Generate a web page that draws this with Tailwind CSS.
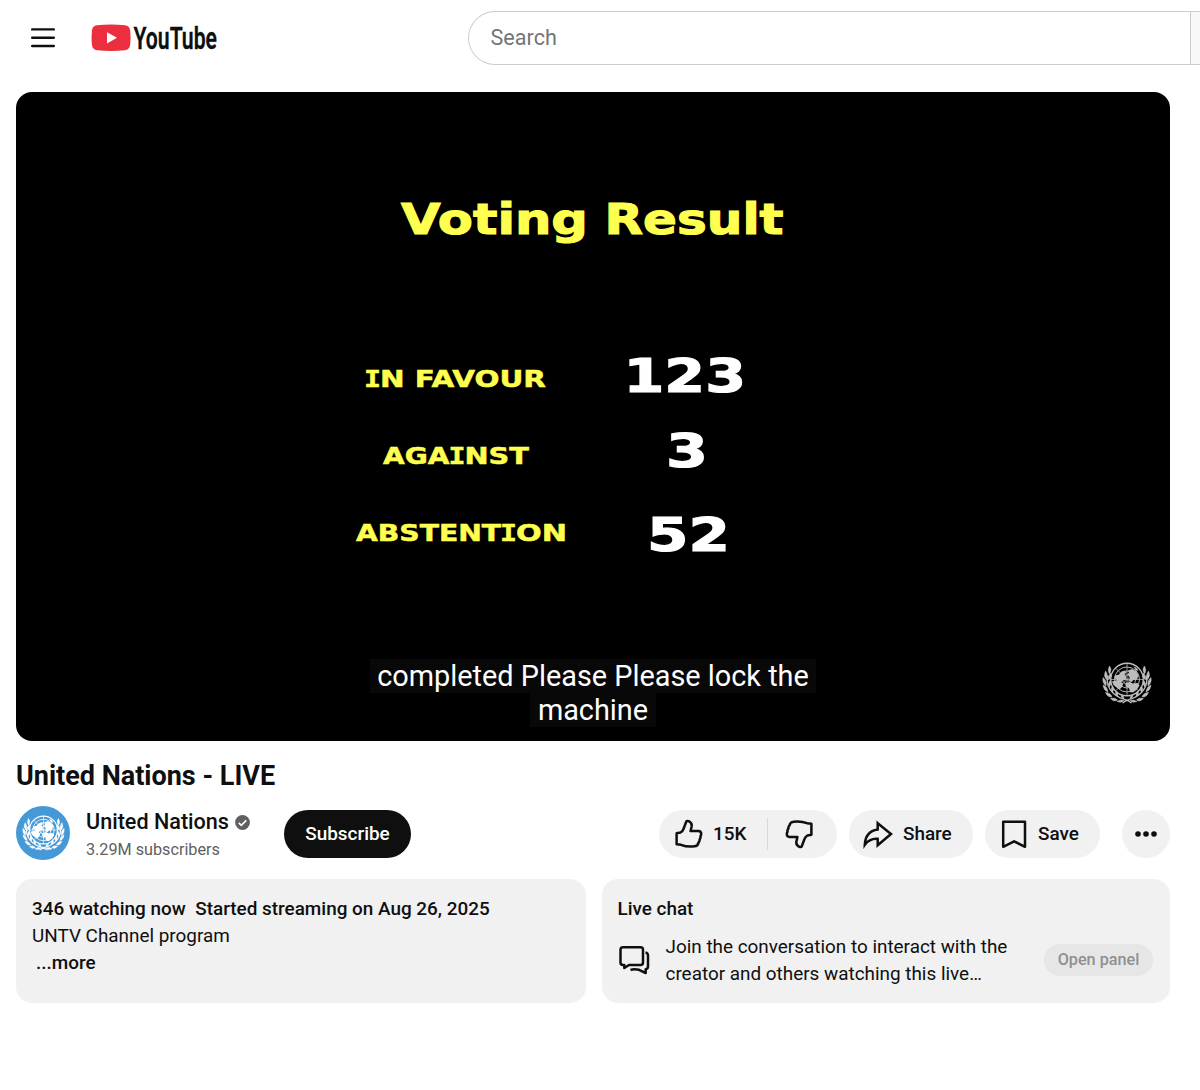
<!DOCTYPE html>
<html lang="en">
<head>
  <meta charset="UTF-8">
  <meta name="viewport" content="width=device-width, initial-scale=1.0">
  <title>United Nations - LIVE - YouTube</title>
  <script src="https://cdn.jsdelivr.net/npm/@tailwindcss/browser@4"></script>
</head>
<body class="bg-white text-[#0f0f0f] font-['Roboto',sans-serif] w-[1200px] h-[1090px] overflow-hidden">

  <!-- Shared UN emblem -->
  <svg class="hidden">
    <symbol id="un-emblem" viewBox="0 0 100 84">
      <g fill="none" stroke="currentColor" stroke-width="1.9">
        <circle cx="50" cy="35" r="32.5" stroke-width="2.6"/>
        <circle cx="50" cy="35" r="25"/>
        <circle cx="50" cy="35" r="17"/>
        <circle cx="50" cy="35" r="9"/>
        <path d="M50 2v66M17 35h66M27 12l46 46M73 12L27 58" stroke-width="1.5"/>
      </g>
      <g fill="currentColor">
        <path d="M34 25l5-6 7-2 3 4-4 4 4 5-2 6-6 1-3 6-5-2-4-7-5-1 2-6z"/>
        <path d="M52 17l8-3 9 5 4 8-3 8-7 1-4 4-6-3 3-6-5-6 3-4z"/>
        <path d="M20 39l11-3 6 5 5 1-1 7-6 6-6-4-6-5z"/>
        <path d="M47 42l8-2 7 3 9-1 4 5-5 8-8 6-6-1-2-8-7-3z"/>
        <path d="M63 8l6 4 4 6-6-2z"/>
      </g>
      <!-- Olive branches -->
      <g id="un-branch">
        <path d="M12 27C6 45 18 67 45 75M45 75q8 2 14 7" fill="none" stroke="currentColor" stroke-width="2.6"/>
        <g fill="currentColor" stroke="currentColor" stroke-width="1">
          <path d="M15 8q6 6 0 16q-5-7 0-16z"/>
          <path d="M7 18q6 7 2 17q-7-7-2-17z"/>
          <path d="M2 31q8 6 6 17q-8-6-6-17z"/>
          <path d="M2 46q9 3 10 14q-9-3-10-14z"/>
          <path d="M7 61q10 0 13 9q-9 1-13-9z"/>
          <path d="M17 73q9-3 14 3q-7 5-14-3z"/>
          <path d="M18 22q3 8-5 14q-2-8 5-14z"/>
          <path d="M17 36q4 7-3 14q-3-7 3-14z"/>
          <path d="M21 48q5 6 0 13q-5-6 0-13z"/>
          <path d="M28 58q6 4 3 11q-6-4-3-11z"/>
          <path d="M38 65q6 2 6 9q-6-2-6-9z"/>
          <path d="M30 79q7-5 14-2q-5 6-14 2z"/>
        </g>
      </g>
      <use href="#un-branch" transform="matrix(-1 0 0 1 100 0)"/>
    </symbol>
  </svg>

  <!-- Masthead -->
  <header class="flex items-center h-[76px] pl-[31px]">
    <button class="block">
      <svg class="w-6 h-5" viewBox="0 0 24 20" stroke="#0f0f0f" stroke-width="2.4" stroke-linecap="round">
        <path d="M1.2 1.4h21.6M1.2 9.700h21.6M1.2 18h21.6"/>
      </svg>
    </button>
    <a class="block ml-9">
      <svg class="w-[137px] h-12 overflow-visible" viewBox="0 -9 137 48">
        <path d="M6 2.2Q20 .8 34 2.2Q38.600 2.700 39.200 7.500Q40 15 39.200 21.500Q38.600 26.800 34 27.300Q20 28.800 6 27.300Q1.400 26.800.900 21.500Q.200 15 .900 7.500Q1.400 2.700 6 2.200z" fill="#ec2f3e"/>
        <path d="M16 9.200v11.200l10-5.600z" fill="#fff"/>
        <text x="42.500" y="26" font-size="31" font-weight="600" textLength="83.500" lengthAdjust="spacingAndGlyphs" fill="#0f0f0f" stroke="#0f0f0f" stroke-width=".3">YouTube</text>
      </svg>
    </a>
    <div class="flex flex-1 h-[54px] ml-60 border border-r-0 border-[#ccc] rounded-l-full overflow-hidden">
      <div class="flex items-center w-[722px] shrink-0 pl-[21.5px] border-r border-[#ccc] text-[21.6px] text-[#757575]">Search</div>
      <div class="flex-1 bg-[#f8f8f8]"></div>
    </div>
  </header>

  <main class="w-[1154px] ml-4 mt-4">

    <!-- Player -->
    <div class="relative h-[649px] bg-black rounded-2xl overflow-hidden">
      <svg class="w-[1154px] h-[649px]" viewBox="16 92 1154 649" font-family="DejaVu Sans" font-weight="700">
        <g fill="#ffff50" stroke="#ffff50">
          <g font-size="42" stroke-width="1.1">
            <text x="401" y="234" textLength="187" lengthAdjust="spacingAndGlyphs">Voting</text>
            <text x="604.500" y="234" textLength="179" lengthAdjust="spacingAndGlyphs">Result</text>
          </g>
          <g font-size="23" stroke-width=".5">
            <text x="364" y="387" font-family="DejaVu Sans Mono" textLength="17" lengthAdjust="spacingAndGlyphs">I</text>
            <text x="380" y="387" textLength="166" lengthAdjust="spacingAndGlyphs">N FAVOUR</text>
            <text x="383" y="464" textLength="66.500" lengthAdjust="spacingAndGlyphs">AGA</text>
            <text x="448.500" y="464" font-family="DejaVu Sans Mono" textLength="17" lengthAdjust="spacingAndGlyphs">I</text>
            <text x="464.500" y="464" textLength="64.500" lengthAdjust="spacingAndGlyphs">NST</text>
            <text x="356" y="541" textLength="145" lengthAdjust="spacingAndGlyphs">ABSTENT</text>
            <text x="500" y="541" font-family="DejaVu Sans Mono" textLength="17" lengthAdjust="spacingAndGlyphs">I</text>
            <text x="516" y="541" textLength="51" lengthAdjust="spacingAndGlyphs">ON</text>
          </g>
        </g>
        <g fill="#fff" stroke="#fff" stroke-width="1.2" font-size="47">
          <text x="623.500" y="392" textLength="122.500" lengthAdjust="spacingAndGlyphs">123</text>
          <text x="666" y="466.500" textLength="42" lengthAdjust="spacingAndGlyphs">3</text>
          <text x="647" y="551" textLength="83" lengthAdjust="spacingAndGlyphs">52</text>
        </g>
      </svg>

      <!-- Captions -->
      <div class="absolute inset-x-0 top-[567px] flex flex-col items-center text-white text-[28.85px] leading-[34px]">
        <span class="bg-[#080808] px-[7.5px]">completed Please Please lock the</span>
        <span class="bg-[#080808] px-[7.5px]">machine</span>
      </div>

      <svg class="absolute left-[1086px] top-[570px] w-[50px] h-[42px] text-[#bdbdbd]"><use href="#un-emblem"/></svg>
    </div>

    <h1 class="mt-[17px] h-9 text-[27px] leading-9 font-bold">United Nations - LIVE</h1>

    <!-- Channel and actions -->
    <div class="flex h-[58px] mt-[11px]">
      <div class="flex items-center justify-center size-[54px] shrink-0 mt-[0.5px] rounded-full bg-[#4499d6] text-white">
        <svg class="w-[43px] h-[36px]"><use href="#un-emblem"/></svg>
      </div>
      <div class="w-[198px] shrink-0 ml-4 pt-[3px]">
        <div class="flex items-center h-[29px] text-[21.6px] font-medium whitespace-nowrap">
          United Nations
          <svg class="size-[15px] ml-1.5 shrink-0" viewBox="0 0 15 15">
            <circle cx="7.500" cy="7.500" r="7.400" fill="#606060"/>
            <path d="M3.800 7.800l2.500 2.500 5-5" fill="none" stroke="#fff" stroke-width="1.700"/>
          </svg>
        </div>
        <div class="h-6 mt-px leading-6 text-[16.2px] text-[#606060]">3.29M subscribers</div>
      </div>
      <button class="w-[127px] h-12 mt-[5px] rounded-full bg-[#0f0f0f] text-white text-[18.9px] font-medium">Subscribe</button>

      <div class="flex ml-auto mt-[5px] text-[18.9px] font-medium">
        <div class="flex items-center w-[178px] h-12 rounded-full bg-[#f1f1f1]">
          <button class="flex items-center w-[108px] pl-[15px]">
            <svg class="size-[30px]" viewBox="0 0 30 30" fill="none" stroke="#0f0f0f" stroke-width="2.500" stroke-linejoin="round">
              <path id="thumb" d="M2.600 14.300L6.500 13.500Q8.700 12.300 9.500 10L12.300 2.500Q13 1.500 14.600 2.200Q18.300 3.800 17.600 7.500L16.600 12H24.500Q27.200 12.200 27.200 14.700Q27.200 16.400 26.400 17.300Q26.900 19.200 25.600 20.500Q25.800 22.500 24.500 23.500Q24 27 20.500 27.300Q13 28.200 7 25.800L2.600 25.200z"/>
            </svg>
            <span class="ml-[9px]">15K</span>
          </button>
          <div class="w-px h-8 bg-[#d9d9d9]"></div>
          <button class="ml-4">
            <svg class="size-[30px]" viewBox="0 0 30 30" fill="none" stroke="#0f0f0f" stroke-width="2.500" stroke-linejoin="round">
              <use href="#thumb" transform="rotate(180 15 15)"/>
            </svg>
          </button>
        </div>
        <button class="flex items-center w-[124px] h-12 ml-3 pl-[14px] rounded-full bg-[#f1f1f1]">
          <svg class="w-[30px] h-[30px]" viewBox="0 0 30 30" fill="none" stroke="#0f0f0f" stroke-width="2.500" stroke-linejoin="miter">
            <path d="M14.700 4.200L28 15L14.700 26.300V19.800Q6.500 19.200 1.800 25.800Q2.300 12.500 14.700 10.500z"/>
          </svg>
          <span class="ml-[10px]">Share</span>
        </button>
        <button class="flex items-center w-[115px] h-12 ml-3 pl-[15px] rounded-full bg-[#f1f1f1]">
          <svg class="size-[30px]" viewBox="0 0 30 30" fill="none" stroke="#0f0f0f" stroke-width="2.500" stroke-linejoin="round">
            <path d="M3.200 2.800h21.800v25L14.100 22.300L3.200 27.800z"/>
          </svg>
          <span class="ml-2">Save</span>
        </button>
        <button class="flex items-center justify-center size-12 ml-[22px] rounded-full bg-[#f1f1f1]">
          <svg class="w-6 h-6" viewBox="0 0 24 24" fill="#0f0f0f">
            <circle cx="4" cy="12" r="2.800"/><circle cx="12" cy="12" r="2.800"/><circle cx="20" cy="12" r="2.800"/>
          </svg>
        </button>
      </div>
    </div>

    <!-- Description and live chat -->
    <div class="flex gap-4 mt-4 text-[18.9px] leading-[27px]">
      <div class="w-[569.5px] h-[123.5px] p-4 rounded-2xl bg-[#f1f1f1]">
        <div class="font-medium"><span>346 watching now</span><span class="ml-[9.5px]">Started streaming on Aug 26, 2025</span></div>
        <div>UNTV Channel program</div>
        <div class="pl-1 font-medium">...more</div>
      </div>
      <div class="flex-1 h-[123.5px] p-4 rounded-2xl bg-[#f1f1f1]">
        <div class="font-medium">Live chat</div>
        <div class="flex items-center mt-[10.5px]">
          <svg class="size-8" viewBox="0 0 32 32" fill="none" stroke="#0f0f0f" stroke-width="2.500" stroke-linejoin="round">
            <path d="M5 3.200H22.500Q25 3.200 25 5.700V18.500Q25 21 22.500 21H11L6.300 24V21H5Q2.500 21 2.500 18.500V5.700Q2.500 3.200 5 3.200z"/>
            <path d="M27.500 8.500Q30 9 30 11.500V22.500Q30 25 27.700 25.200V29L21 25.800Q16 24.500 12.500 26"/>
          </svg>
          <p class="w-[360px] ml-4 whitespace-nowrap">Join the conversation to interact with the<br>creator and others watching this live…</p>
          <button class="w-[109px] h-8 ml-auto mr-px rounded-full bg-[#e6e6e6] text-[#909090] text-[16.2px] leading-8 font-medium">Open panel</button>
        </div>
      </div>
    </div>
  </main>

</body>
</html>
